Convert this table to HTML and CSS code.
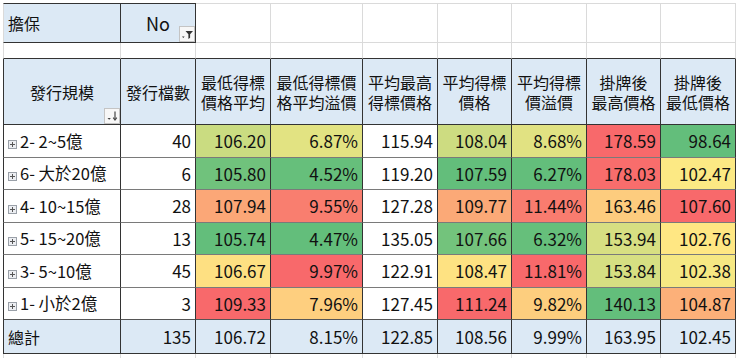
FILE: index.html
```html
<!DOCTYPE html>
<html lang="zh-Hant">
<head>
    <meta charset="UTF-8">
    <meta name="viewport" content="width=device-width, initial-scale=1.0">
    <title>發行規模 樞紐分析</title>
    <link rel="stylesheet" href="styles.css">
</head>
<body>

    <table class="sheet">
        <colgroup>
            <col class="w-label">
            <col class="w-75">
            <col class="w-75">
            <col class="w-92">
            <col class="w-75">
            <col class="w-74">
            <col class="w-75">
            <col class="w-74">
            <col class="w-75">
        </colgroup>

        <tr class="filter-row">
            <td class="filter-label">擔保</td>
            <td class="filter-value">No
                <span class="filter-btn">
                    <svg width="16" height="16" viewBox="0 0 16 16">
                        <rect x="0.5" y="0.5" width="15" height="15" fill="#f7f7f7" stroke="#c4c4c4"/>
                        <path d="M3 10.5h2.6l-1.3 1.5z" fill="#333"/>
                        <path d="M6.5 5h7.5l-2.9 3.2v3.6l-1.7 1.1v-4.7z" fill="#333"/>
                    </svg>
                </span>
            </td>
            <td></td><td></td><td></td><td></td><td></td><td></td><td></td>
        </tr>

        <tr class="spacer-row">
            <td></td><td></td><td></td><td></td><td></td><td></td><td></td><td></td><td></td>
        </tr>

        <tr class="head-row">
            <th class="head-first">發行規模
                <span class="sort-btn">
                    <svg width="16" height="16" viewBox="0 0 16 16">
                        <rect x="0.5" y="0.5" width="15" height="15" fill="#f7f7f7" stroke="#c4c4c4"/>
                        <path d="M3.5 10h3.4l-1.7 1.8z" fill="#444"/>
                        <path d="M11 3.5v8" stroke="#444" stroke-width="1.2"/>
                        <path d="M9.2 9.6l1.8 2.4 1.8-2.4" fill="none" stroke="#444" stroke-width="1.1"/>
                    </svg>
                </span>
            </th>
            <th>發行檔數</th>
            <th>最低得標<br>價格平均</th>
            <th>最低得標價<br>格平均溢價</th>
            <th>平均最高<br>得標價格</th>
            <th>平均得標<br>價格</th>
            <th>平均得標<br>價溢價</th>
            <th>掛牌後<br>最高價格</th>
            <th>掛牌後<br>最低價格</th>
        </tr>

        <tr class="data-row">
            <td class="label"><svg class="expand" width="9" height="9" viewBox="0 0 9 9"><rect x="0.5" y="0.5" width="8" height="8" fill="#eceef2" stroke="#9aa0a8"/><path d="M2 4.5h5M4.5 2v5" stroke="#555"/></svg>2- 2~5億</td>
            <td class="num">40</td>
            <td class="num" style="background:rgb(202,220,129)">106.20</td>
            <td class="num" style="background:rgb(226,227,130)">6.87%</td>
            <td class="num">115.94</td>
            <td class="num" style="background:rgb(205,220,129)">108.04</td>
            <td class="num" style="background:rgb(225,226,130)">8.68%</td>
            <td class="num" style="background:rgb(248,105,107)">178.59</td>
            <td class="num" style="background:rgb(99,190,123)">98.64</td>
        </tr>
        <tr class="data-row">
            <td class="label"><svg class="expand" width="9" height="9" viewBox="0 0 9 9"><rect x="0.5" y="0.5" width="8" height="8" fill="#eceef2" stroke="#9aa0a8"/><path d="M2 4.5h5M4.5 2v5" stroke="#555"/></svg>6- 大於20億</td>
            <td class="num">6</td>
            <td class="num" style="background:rgb(112,194,124)">105.80</td>
            <td class="num" style="background:rgb(102,191,123)">4.52%</td>
            <td class="num">119.20</td>
            <td class="num" style="background:rgb(99,190,123)">107.59</td>
            <td class="num" style="background:rgb(99,190,123)">6.27%</td>
            <td class="num" style="background:rgb(248,109,108)">178.03</td>
            <td class="num" style="background:rgb(252,233,132)">102.47</td>
        </tr>
        <tr class="data-row">
            <td class="label"><svg class="expand" width="9" height="9" viewBox="0 0 9 9"><rect x="0.5" y="0.5" width="8" height="8" fill="#eceef2" stroke="#9aa0a8"/><path d="M2 4.5h5M4.5 2v5" stroke="#555"/></svg>4- 10~15億</td>
            <td class="num">28</td>
            <td class="num" style="background:rgb(251,167,119)">107.94</td>
            <td class="num" style="background:rgb(249,126,111)">9.55%</td>
            <td class="num">127.28</td>
            <td class="num" style="background:rgb(251,169,119)">109.77</td>
            <td class="num" style="background:rgb(249,124,111)">11.44%</td>
            <td class="num" style="background:rgb(253,204,126)">163.46</td>
            <td class="num" style="background:rgb(248,105,107)">107.60</td>
        </tr>
        <tr class="data-row">
            <td class="label"><svg class="expand" width="9" height="9" viewBox="0 0 9 9"><rect x="0.5" y="0.5" width="8" height="8" fill="#eceef2" stroke="#9aa0a8"/><path d="M2 4.5h5M4.5 2v5" stroke="#555"/></svg>5- 15~20億</td>
            <td class="num">13</td>
            <td class="num" style="background:rgb(99,190,123)">105.74</td>
            <td class="num" style="background:rgb(99,190,123)">4.47%</td>
            <td class="num">135.05</td>
            <td class="num" style="background:rgb(115,195,124)">107.66</td>
            <td class="num" style="background:rgb(102,191,123)">6.32%</td>
            <td class="num" style="background:rgb(215,223,130)">153.94</td>
            <td class="num" style="background:rgb(255,231,131)">102.76</td>
        </tr>
        <tr class="data-row">
            <td class="label"><svg class="expand" width="9" height="9" viewBox="0 0 9 9"><rect x="0.5" y="0.5" width="8" height="8" fill="#eceef2" stroke="#9aa0a8"/><path d="M2 4.5h5M4.5 2v5" stroke="#555"/></svg>3- 5~10億</td>
            <td class="num">45</td>
            <td class="num" style="background:rgb(254,224,130)">106.67</td>
            <td class="num" style="background:rgb(248,105,107)">9.97%</td>
            <td class="num">122.91</td>
            <td class="num" style="background:rgb(254,226,130)">108.47</td>
            <td class="num" style="background:rgb(248,105,107)">11.81%</td>
            <td class="num" style="background:rgb(214,223,130)">153.84</td>
            <td class="num" style="background:rgb(246,232,131)">102.38</td>
        </tr>
        <tr class="data-row last">
            <td class="label"><svg class="expand" width="9" height="9" viewBox="0 0 9 9"><rect x="0.5" y="0.5" width="8" height="8" fill="#eceef2" stroke="#9aa0a8"/><path d="M2 4.5h5M4.5 2v5" stroke="#555"/></svg>1- 小於2億</td>
            <td class="num">3</td>
            <td class="num" style="background:rgb(248,105,107)">109.33</td>
            <td class="num" style="background:rgb(254,207,127)">7.96%</td>
            <td class="num">127.45</td>
            <td class="num" style="background:rgb(248,105,107)">111.24</td>
            <td class="num" style="background:rgb(253,206,126)">9.82%</td>
            <td class="num" style="background:rgb(99,190,123)">140.13</td>
            <td class="num" style="background:rgb(252,176,121)">104.87</td>
        </tr>

        <tr class="total-row">
            <td class="total-label">總計</td>
            <td class="num">135</td>
            <td class="num">106.72</td>
            <td class="num">8.15%</td>
            <td class="num">122.85</td>
            <td class="num">108.56</td>
            <td class="num">9.99%</td>
            <td class="num">163.95</td>
            <td class="num">102.45</td>
        </tr>

        <tr class="tail-row">
            <td></td><td></td><td></td><td></td><td></td><td></td><td></td><td></td><td></td>
        </tr>
    </table>

</body>
</html>
```

FILE: styles.css
```css
body {
    margin: 0;
    padding: 3px 0 0 3px;
    background: #fff;
    font-family: "Noto Sans CJK TC", "Noto Sans", sans-serif;
    color: #111;
}
.sheet {
    border-collapse: separate;
    border-spacing: 0;
    table-layout: fixed;
    width: 733px;
    font-size: 17px;
}
.w-label { width: 118px; }
.w-75 { width: 75px; }
.w-74 { width: 74px; }
.w-92 { width: 92px; }

.sheet td, .sheet th {
    padding: 0 4px;
    border-right: 1px solid #dadada;
    border-bottom: 1px solid #dadada;
    font-weight: normal;
    white-space: nowrap;
    overflow: hidden;
    vertical-align: middle;
}
.sheet tr > :first-child {
    border-left: 1px solid #dadada;
}

/* report filter */
.filter-row { height: 40px; }
.filter-row td {
    border-top: 1px solid #dadada;
}
.filter-row .filter-label,
.filter-row .filter-value {
    background: #dce9f5;
    border-top-color: #333;
    border-right-color: #333;
    border-bottom-color: #333;
}
.filter-row .filter-label {
    border-left-color: #333;
    font-size: 16px;
}
.filter-value {
    position: relative;
    text-align: center;
    font-size: 18px;
}
.filter-btn, .sort-btn {
    position: absolute;
    right: 0;
    bottom: 0;
    width: 16px;
    height: 16px;
    line-height: 0;
}

.spacer-row { height: 16px; }
.spacer-row td {
    border-bottom-color: #333;
}

/* pivot header */
.head-row { height: 66px; }
.head-row th {
    background: #dce9f5;
    border-right-color: #333;
    border-bottom-color: #333;
    text-align: center;
    font-size: 16px;
    line-height: 20px;
}
.head-row th:first-child {
    border-left-color: #333;
}
.head-first {
    position: relative;
}

/* rows */
.data-row { height: 32.5px; }
.data-row td {
    border-right-color: #333;
    border-bottom-color: #7a7a7a;
}
.data-row.last td {
    border-bottom-color: #555;
}
.data-row td:first-child,
.total-row td:first-child {
    border-left-color: #333;
}
.label {
    padding-left: 6px;
    font-size: 16.5px;
}
.expand {
    vertical-align: -1px;
    margin-right: 3px;
}
.num {
    text-align: right;
}

.total-row { height: 34px; }
.total-row td {
    background: #dce9f5;
    border-right-color: #333;
    border-bottom-color: #333;
}
.total-row .total-label {
    font-size: 16px;
}

.tail-row { height: 20px; }
```
